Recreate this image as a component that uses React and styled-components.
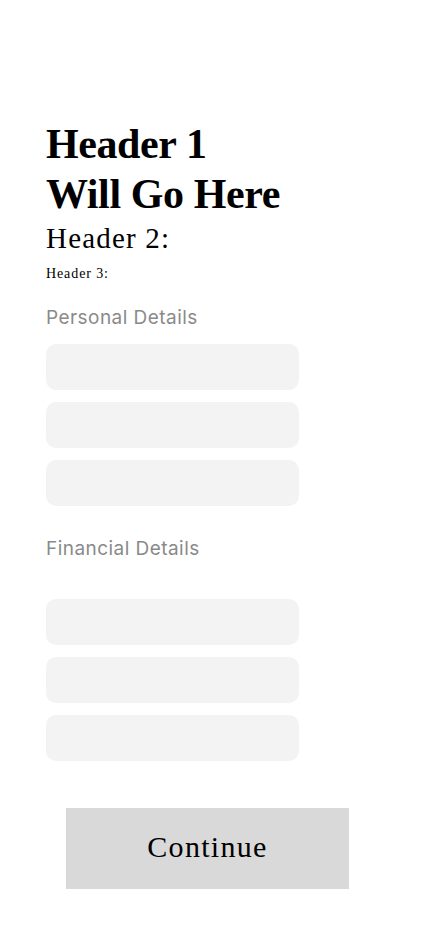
import React from 'react'
import styled, { createGlobalStyle } from 'styled-components'

const GlobalStyle = createGlobalStyle`
  html, body {
    margin: 0;
    padding: 0;
    background: #ffffff;
  }
  * {
    box-sizing: border-box;
  }
`

const Page = styled.div`
  width: 430px;
  min-height: 932px;
  padding: 119px 0 0 46px;
  display: flex;
  flex-direction: column;
  align-items: flex-start;
  font-family: "Liberation Serif", serif;
  color: #000;
`

const Title = styled.h1`
  margin: 0;
  font-size: 42px;
  line-height: 50px;
  font-weight: 700;
  letter-spacing: -0.4px;
`

const Subtitle = styled.h2`
  margin: 2px 0 0;
  font-size: 29px;
  line-height: 34px;
  font-weight: 400;
  letter-spacing: 1.2px;
`

const SmallHeader = styled.h3`
  margin: 10px 0 0;
  font-size: 14px;
  line-height: 17px;
  font-weight: 400;
  letter-spacing: 0.9px;
`

const SectionLabel = styled.div`
  margin-top: ${props => props.gap}px;
  font-family: Inter, "Noto Sans", sans-serif;
  font-size: 19px;
  line-height: 22px;
  letter-spacing: 0.45px;
  color: #8a8a8a;
`

const FieldGroup = styled.div`
  margin-top: ${props => props.gap}px;
  display: flex;
  flex-direction: column;
  gap: 12px;
`

const Field = styled.input`
  width: 253px;
  height: 46px;
  border: none;
  border-radius: 10px;
  background: #f3f3f3;
  padding: 0 14px;
  font-family: Inter, sans-serif;
  font-size: 16px;
  outline: none;
`

const ContinueButton = styled.button`
  margin: 47px 0 0 20px;
  width: 283px;
  height: 81px;
  padding: 0 0 3px;
  border: none;
  border-radius: 0;
  background: #d9d9d9;
  font-family: "Liberation Serif", serif;
  font-size: 30px;
  letter-spacing: 1.3px;
  color: #000;
  cursor: pointer;
`

export default function App() {
  return (
    <>
      <GlobalStyle />
      <Page>
        <Title>
          Header 1<br />Will Go Here
        </Title>
        <Subtitle>Header 2:</Subtitle>
        <SmallHeader>Header 3:</SmallHeader>

        <SectionLabel gap={25}>Personal Details</SectionLabel>
        <FieldGroup gap={15}>
          <Field />
          <Field />
          <Field />
        </FieldGroup>

        <SectionLabel gap={32}>Financial Details</SectionLabel>
        <FieldGroup gap={39}>
          <Field />
          <Field />
          <Field />
        </FieldGroup>

        <ContinueButton>Continue</ContinueButton>
      </Page>
    </>
  )
}
